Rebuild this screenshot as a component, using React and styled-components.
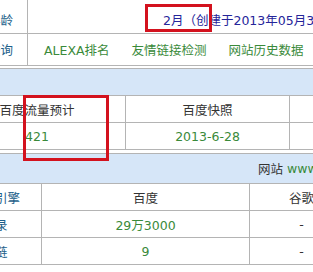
import React from "react";
import styled, { createGlobalStyle } from "styled-components";

const Global = createGlobalStyle`
  html, body { margin: 0; padding: 0; background: #fff; overflow: hidden; }
  body {
    font-family: "DejaVu Sans", "Noto Sans CJK SC", sans-serif;
    font-size: 12.5px;
    color: #333;
  }
`;

const Page = styled.div`
  position: relative;
  width: 520px;
  margin-left: -51px;
`;

const Table = styled.div`
  display: grid;
  grid-template-columns: ${(p) => p.$cols};
`;

const Cell = styled.div`
  height: ${(p) => p.$h || 26}px;
  border-bottom: 1px solid #b4b4b4;
  border-right: ${(p) => (p.$br ? "1px solid #b4b4b4" : "none")};
  display: flex;
  align-items: center;
  justify-content: ${(p) => p.$align || "center"};
  padding-left: ${(p) => p.$pl || 0}px;
  padding-top: ${(p) => p.$pt || 0}px;
  box-sizing: border-box;
  color: ${(p) => p.$color || "#333"};
  white-space: nowrap;
  overflow: hidden;
  gap: ${(p) => p.$gap || 0}px;
`;

const Band = styled.div`
  height: ${(p) => p.$h}px;
  background: #d6e6f8;
  border-top: 1px solid #b4b4b4;
  border-bottom: 1px solid #b4b4b4;
  margin-top: ${(p) => p.$mt}px;
  display: flex;
  align-items: center;
  padding-left: 309px;
  color: #333;
  white-space: nowrap;
`;

const Green = styled.span`
  color: #3a8a3a;
`;

const Label = "#1d5f8a";
const GreenC = "#3a8a3a";
const Navy = "#25259a";

const Marker = styled.div`
  position: absolute;
  border: 3px solid #d3121e;
  box-sizing: border-box;
  left: ${(p) => p.$x + 51}px;
  top: ${(p) => p.$y}px;
  width: ${(p) => p.$w}px;
  height: ${(p) => p.$h}px;
  pointer-events: none;
`;

export default function App() {
  return (
    <>
      <Global />
      <Page>
        <Table $cols="79px 1fr">
          <Cell $h={34} $pt={6} $br $color={Label}>域名年龄</Cell>
          <Cell $h={34} $pt={6} $align="flex-start" $pl={135} $color={Navy}>
            2月（创建于2013年05月31日）
          </Cell>
          <Cell $h={32} $br $color={Label}>综合查询</Cell>
          <Cell $h={32} $align="flex-start" $pl={16} $gap={22} $color={GreenC}>
            <span>ALEXA排名</span>
            <span>友情链接检测</span>
            <span>网站历史数据</span>
          </Cell>
        </Table>
        <Band $h={26} $mt={2} />
        <Table $cols="177px 164px 1fr">
          <Cell $h={27} $br>百度流量预计</Cell>
          <Cell $h={27} $br>百度快照</Cell>
          <Cell $h={27}>百度权重</Cell>
          <Cell $h={27} $br $color={GreenC}>421</Cell>
          <Cell $h={27} $br $color={GreenC}>2013-6-28</Cell>
          <Cell $h={27} $color={GreenC}>1</Cell>
        </Table>
        <Band $h={29} $mt={3}>
          网站&nbsp;<Green>www.example.com</Green>
        </Band>
        <Table $cols="93px 208px 104px 1fr">
          <Cell $h={27} $br $color={Label}>搜索引擎</Cell>
          <Cell $h={27} $br>百度</Cell>
          <Cell $h={27} $br>谷歌</Cell>
          <Cell $h={27}>搜搜</Cell>
          <Cell $h={27} $br $color={Label}>收录</Cell>
          <Cell $h={27} $br $color={GreenC}>29万3000</Cell>
          <Cell $h={27} $br>-</Cell>
          <Cell $h={27}>-</Cell>
          <Cell $h={27} $br $color={Label}>反链</Cell>
          <Cell $h={27} $br $color={GreenC}>9</Cell>
          <Cell $h={27} $br>-</Cell>
          <Cell $h={27}>-</Cell>
        </Table>
        <Marker $x={145} $y={4} $w={67} $h={28} />
        <Marker $x={23} $y={95} $w={86} $h={66} />
      </Page>
    </>
  );
}
